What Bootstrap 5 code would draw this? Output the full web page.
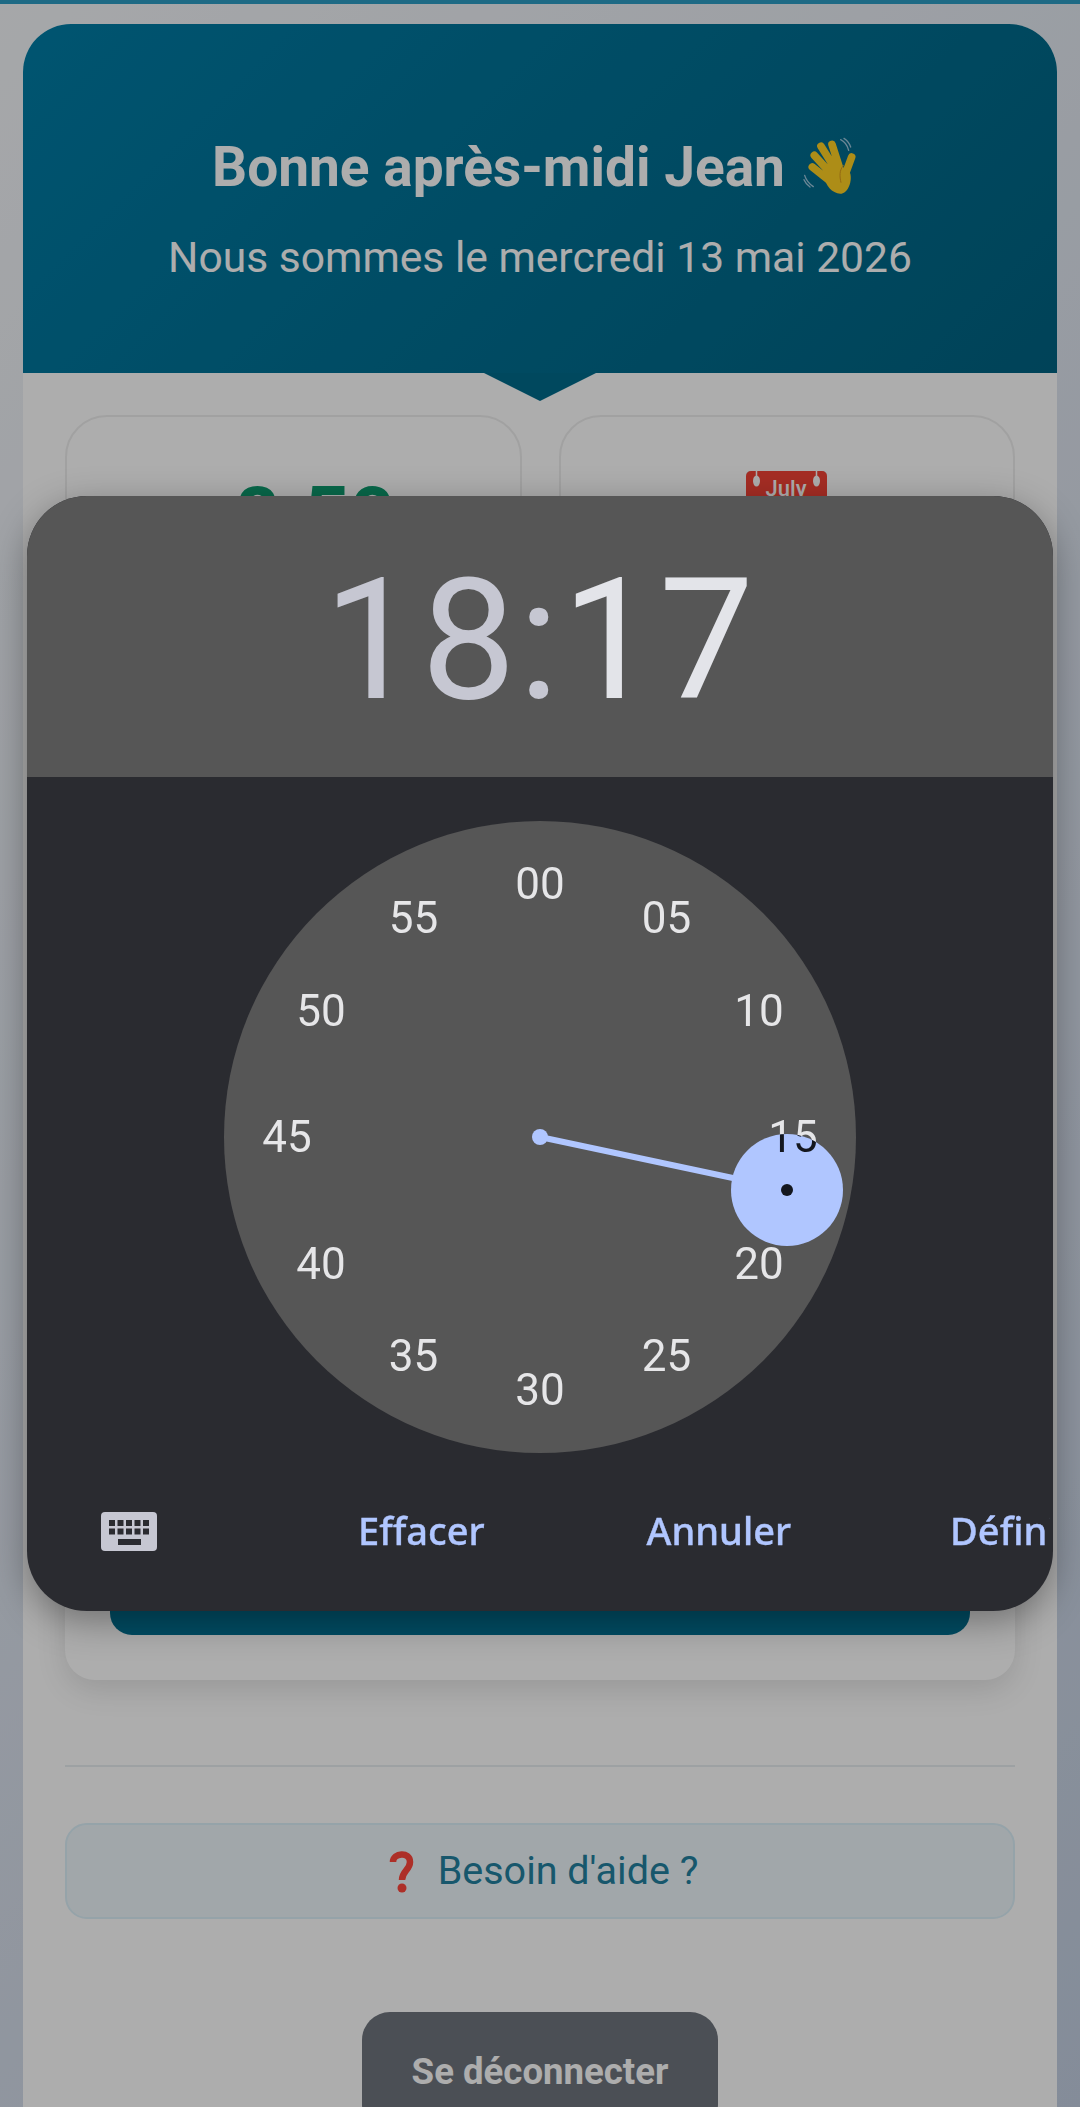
<!DOCTYPE html>
<html lang="fr">
<head>
  <meta charset="UTF-8">
  <meta name="viewport" content="width=device-width, initial-scale=1.0">
  <title>Accueil</title>
  <link href="https://cdn.jsdelivr.net/npm/bootstrap@5.3.0/dist/css/bootstrap.min.css" rel="stylesheet">
  <style>
    html, body { height: 2107px; overflow: hidden; }
    body {
      font-family: Roboto, "Liberation Sans", sans-serif;
      background: linear-gradient(135deg, #f5f7fa 0%, #c3cfe2 100%);
      padding: 0 23px;
    }
    .top-strip { height: 4px; margin: 0 -23px 20px; background: #2d9cc4; }
    .page-box { background: #fff; border-radius: 48px 48px 0 0; height: 2083px; overflow: hidden; }
    .hello-box {
      position: relative;
      height: 349px;
      padding-top: 113px;
      text-align: center;
      color: #fff;
      background: linear-gradient(135deg, #007da6 0%, #006382 100%);
    }
    .hello-box::after {
      content: "";
      position: absolute;
      left: 50%;
      bottom: -28px;
      margin-left: -56px;
      border-left: 56px solid transparent;
      border-right: 56px solid transparent;
      border-top: 28px solid #006a8b;
    }
    .hello-title { font-size: 55px; font-weight: 700; line-height: 58px; margin-bottom: 37px; padding-right: 9px; white-space: nowrap; }
    .hello-title svg { width: 57px; height: 60px; margin-left: 17px; vertical-align: -11px; }
    .hello-date { font-size: 42.6px; line-height: 47px; white-space: nowrap; }
    .content-box { padding: 42px 42px 0; }
    .stat-row { --bs-gutter-x: 37px; --bs-gutter-y: 0; }
    .stat-tile { height: 260px; border: 2px solid #eee; border-radius: 42px; text-align: center; }
    .stat-num { font-size: 80px; font-weight: 700; line-height: 89px; margin-top: 55px; color: #0c9a6e; }
    .cal-icon { width: 81px; height: 90px; margin-top: 54px; }
    .main-tile { height: 965px; margin-top: 40px; border: 0; border-radius: 30px; padding: 45px; justify-content: flex-end; box-shadow: 0 10px 30px rgba(0, 0, 0, .12); }
    .main-btn { height: 90px; border-radius: 22px; background: #007192; border: 0; color: #fff; }
    .rule-line { height: 2px; margin: 85px 0 56px; border: 0; background: #e7edf0; opacity: 1; }
    .help-box {
      height: 96px;
      padding-left: 6px;
      border: 2px solid #dcf0fa;
      border-radius: 22px;
      background: #eef7fb;
      color: #23819f;
      font-size: 39.5px;
    }
    .help-box svg { width: 27px; height: 44px; margin-right: 23px; }
    .logout-btn {
      width: 356px;
      height: 120px;
      margin-top: 93px;
      border: 0;
      border-radius: 28px;
      background: #6f757e;
      color: #fff;
      font-size: 36.6px;
      font-weight: 700;
    }
    .modal-backdrop { --bs-backdrop-opacity: .32; }
    .time-dialog {
      position: absolute;
      top: 496px;
      left: 27px;
      width: 1026px;
      height: 1115px;
      z-index: 1055;
      overflow: hidden;
      border-radius: 60px;
      background: #2a2b30;
      box-shadow: 0 10px 36px rgba(0, 0, 0, .35);
    }
    .time-head { height: 281px; padding-top: 8px; background: #565656; font-size: 169px; font-weight: 400; letter-spacing: 2.4px; line-height: 1; color: #c6c7d2; }
    .time-head .is-active { color: #e3e4e9; }
    .clock-face { position: relative; width: 632px; height: 632px; margin-top: 44px; border-radius: 50%; background: #565656; }
    .clock-num {
      position: absolute;
      width: 80px;
      margin: -26px 0 0 -40px;
      font-size: 44px;
      line-height: 52px;
      text-align: center;
      color: #e6e6e8;
    }
    .clock-hand { position: absolute; left: 316px; top: 316px; width: 253px; height: 6px; margin-top: -3px; background: #b0c6ff; transform-origin: 0 50%; }
    .clock-pin { position: absolute; left: 308px; top: 308px; width: 16px; height: 16px; border-radius: 50%; background: #b0c6ff; }
    .clock-pick { position: absolute; left: 507px; top: 312px; width: 112px; height: 112px; overflow: hidden; border-radius: 50%; background: #b0c6ff; }
    .clock-pick .clock-num { color: #14171f; }
    .clock-pick i { position: absolute; left: 50px; top: 50px; width: 12px; height: 12px; border-radius: 50%; background: #14171f; }
    .time-foot { height: 156px; padding-left: 74px; margin-right: 3px; white-space: nowrap; overflow: hidden; }
    .time-foot svg { flex: none; width: 56px; height: 39px; margin-right: 201px; }
    .dial-btn { flex: none; padding: 0 0 2px; margin-right: 159px; border: 0; color: #b0c6ff; font-family: "Noto Sans", sans-serif; font-size: 38px; font-weight: 500; -webkit-text-stroke: .4px #b0c6ff; }
    .dial-btn:first-of-type { margin-right: 162px; }
  </style>
</head>
<body>
  <div class="top-strip"></div>
  <div class="page-box">
    <div class="hello-box">
      <div class="hello-title">Bonne après-midi Jean<svg viewBox="70 50 171 180"><g fill="none" stroke="#ffd023" stroke-width="23" stroke-linecap="round"><path d="M101 140l50 40M107 105l55 60M127 78l45 72M160 72l25 78M219 110l-22 60"/></g><path d="M135 165c15-20 70-25 80-5 6 28-10 60-30 60-25 0-45-25-50-55z" fill="#ffd023"/><path d="M195 135c-14 14-12 34-8 52" fill="none" stroke="#d99a1c" stroke-width="3"/><g fill="none" stroke="#9cc6dc" stroke-width="4" stroke-linecap="round"><path d="M186 58c12 6 20 16 24 32M196 54c10 6 16 14 20 26M78 165c4 14 12 24 26 34M76 178c4 10 10 16 18 22"/></g></svg></div>
      <div class="hello-date">Nous sommes le mercredi 13 mai 2026</div>
    </div>
    <div class="content-box">
      <div class="row stat-row">
        <div class="col-6">
          <div class="stat-tile">
            <div class="stat-num">+8.50</div>
          </div>
        </div>
        <div class="col-6">
          <div class="stat-tile">
            <svg class="cal-icon" viewBox="0 0 81 90"><rect width="81" height="90" rx="5" fill="#fff" stroke="#ddd"/><path d="M0 5a5 5 0 0 1 5-5h71a5 5 0 0 1 5 5v32H0z" fill="#f44336"/><path d="M10.500 0v6M70.500 0v6" stroke="#fff" stroke-width="1.500"/><ellipse cx="10.500" cy="10" rx="3.500" ry="5.500" fill="#fff"/><ellipse cx="70.500" cy="10" rx="3.500" ry="5.500" fill="#fff"/><text x="40" y="25" fill="#fff" font-family="Roboto, sans-serif" font-size="22" font-weight="500" text-anchor="middle">July</text></svg>
          </div>
        </div>
      </div>
      <div class="card main-tile">
        <button type="button" class="btn main-btn">Pointer</button>
      </div>
      <hr class="rule-line">
      <div class="help-box d-flex align-items-center justify-content-center">
        <svg viewBox="0 0 27 44"><path d="M5 13C5 4 22 2 22 13c0 8-8 9-8 18" fill="none" stroke="#ff463b" stroke-width="6.500"/><circle cx="14" cy="39" r="4.500" fill="#ff463b"/></svg>
        <span>Besoin d'aide ?</span>
      </div>
      <div class="text-center">
        <button type="button" class="btn logout-btn">Se déconnecter</button>
      </div>
    </div>
  </div>

  <div class="modal-backdrop show"></div>

  <div class="time-dialog">
    <div class="time-head d-flex align-items-center justify-content-center">
      <span>18:<span class="is-active">17</span></span>
    </div>
    <div class="d-flex justify-content-center">
      <div class="clock-face" id="face">
        <div class="clock-hand" id="hand"></div>
        <div class="clock-pin"></div>
      </div>
    </div>
    <div class="time-foot d-flex align-items-center">
      <svg viewBox="0 0 56 39"><rect width="56" height="39" rx="4" fill="#c6c7d2"/><g fill="#2a2b30"><rect x="8" y="8" width="6" height="6"/><rect x="16.5" y="8" width="6" height="6"/><rect x="25" y="8" width="6" height="6"/><rect x="33.5" y="8" width="6" height="6"/><rect x="42" y="8" width="6" height="6"/><rect x="8" y="16.5" width="6" height="6"/><rect x="16.5" y="16.5" width="6" height="6"/><rect x="25" y="16.5" width="6" height="6"/><rect x="33.5" y="16.5" width="6" height="6"/><rect x="42" y="16.5" width="6" height="6"/><rect x="17" y="27" width="23" height="6"/></g></svg>
      <button type="button" class="btn dial-btn">Effacer</button>
      <button type="button" class="btn dial-btn">Annuler</button>
      <button type="button" class="btn dial-btn">Définir</button>
    </div>
  </div>

  <script>
    const face = document.getElementById('face');
    const radius = 253;
    const center = 316;
    const selected = 17;

    function placeNum(parent, label, x, y) {
      const el = document.createElement('span');
      el.className = 'clock-num';
      el.textContent = label;
      el.style.left = x + 'px';
      el.style.top = y + 'px';
      parent.appendChild(el);
    }

    for (let m = 0; m < 60; m += 5) {
      const a = m * Math.PI / 30;
      placeNum(face, String(m).padStart(2, '0'), center + radius * Math.sin(a), center - radius * Math.cos(a));
    }

    // selected minute: hand plus disc, the label part under the disc goes dark
    const angle = selected * Math.PI / 30;
    document.getElementById('hand').style.transform = 'rotate(' + (selected * 6 - 90) + 'deg)';
    const pick = document.createElement('div');
    pick.className = 'clock-pick';
    pick.innerHTML = '<i></i>';
    const px = center + radius * Math.sin(angle) - 56;
    const py = center - radius * Math.cos(angle) - 56;
    pick.style.left = px + 'px';
    pick.style.top = py + 'px';
    placeNum(pick, '15', center + radius - px, center - py);
    face.appendChild(pick);
  </script>
  <script src="https://cdn.jsdelivr.net/npm/bootstrap@5.3.0/dist/js/bootstrap.bundle.min.js"></script>
</body>
</html>
